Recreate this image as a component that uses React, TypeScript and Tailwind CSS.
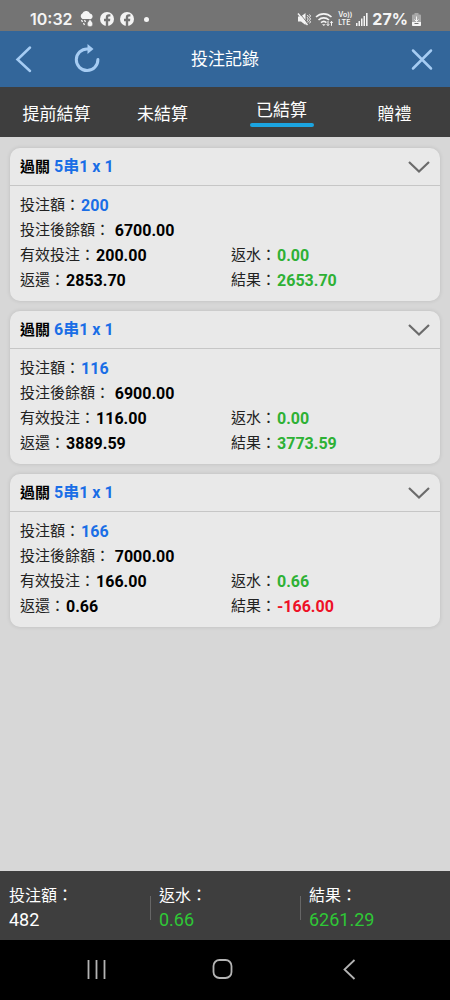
import React from "react";

type Bet = {
  type: string;
  stake: string;
  balance: string;
  valid: string;
  payout: string;
  rebate: string;
  result: string;
};

const bets: Bet[] = [
  {
    type: "5串1 x 1",
    stake: "200",
    balance: "6700.00",
    valid: "200.00",
    payout: "2853.70",
    rebate: "0.00",
    result: "2653.70",
  },
  {
    type: "6串1 x 1",
    stake: "116",
    balance: "6900.00",
    valid: "116.00",
    payout: "3889.59",
    rebate: "0.00",
    result: "3773.59",
  },
  {
    type: "5串1 x 1",
    stake: "166",
    balance: "7000.00",
    valid: "166.00",
    payout: "0.66",
    rebate: "0.66",
    result: "-166.00",
  },
];

const tabs = ["提前結算", "未結算", "已結算", "贈禮"];

const FacebookIcon = () => (
  <svg width="14" height="14" viewBox="0 0 14 14">
    <circle cx="7" cy="7" r="7" fill="#f4f4f4" />
    <path
      d="M5.800 14V9.200H4V6.800h1.800V5.400C5.800 3.500 7 2.300 8.800 2.300h1.600v2.200H9.200c-.7 0-1 .4-1 1v1.300h2.100L10 9.200H8.200V14z"
      fill="#747474"
    />
  </svg>
);

const StatusBar = () => (
  <div className="flex h-[31px] items-center justify-between bg-[#747474] pt-[7px] pr-[29px] pl-[30px] font-['Inter','Liberation_Sans',sans-serif] text-[#f4f4f4]">
    <div className="flex items-center gap-[6px]">
      <span className="text-base leading-5 font-semibold">10:32</span>
      <svg width="15" height="16" viewBox="0 0 15 16">
        <path
          d="M3.500 8A3 3 0 0 1 3.300 2.600 4.200 4.200 0 0 1 11 2.400 3 3 0 0 1 12 8z"
          fill="#f4f4f4"
        />
        <path
          d="M2.500 9l1 2M5.500 9l1 2M4.500 12l1 2"
          stroke="#f4f4f4"
          strokeWidth="1.3"
        />
        <path
          d="M11 8c1.700 2.600 2.800 3.500 2.800 5a2.800 2.800 0 0 1-5.600 0c0-1.500 1.100-2.400 2.800-5z"
          fill="#f4f4f4"
          stroke="#747474"
          strokeWidth=".6"
        />
      </svg>
      <FacebookIcon />
      <FacebookIcon />
      <span className="ml-1 size-[5px] rounded-full bg-[#f4f4f4]" />
    </div>
    <div className="flex items-center gap-1">
      <svg width="14" height="14" viewBox="0 0 14 14" fill="none">
        <path d="M1 4.500h3L8.500 1v12L4 9.500H1z" fill="#f4f4f4" />
        <path
          d="M10.300 3l1 1.300-1 1.400 1 1.300-1 1.300 1 1.400-1 1.300M12.500 2.500l1 1.400-1 1.500 1 1.500-1 1.500 1 1.500-1 1.500"
          stroke="#f4f4f4"
        />
        <path d="M2.500 1.200l9 11" stroke="#747474" />
        <path d="M1 1.500l9.500 11.500" stroke="#f4f4f4" strokeWidth="1.400" />
      </svg>
      <svg width="19" height="15" viewBox="0 0 19 15" fill="none">
        <path
          d="M1 5c4.500-4.200 11-4.200 15.500 0M3.500 8c3-2.800 7.500-2.800 10.500 0M6 10.600c1.800-1.600 3.800-1.600 5.400 0"
          stroke="#f4f4f4"
          strokeWidth="1.600"
        />
        <path d="M7 12.200h3.600L8.800 14z" fill="#f4f4f4" />
        <path
          d="M13 9v4.500M11.700 12.200l1.300 1.500 1.300-1.500M16.500 13.800V9.500M15.200 10.800l1.300-1.500 1.300 1.500"
          stroke="#f4f4f4"
        />
      </svg>
      <span className="flex flex-col text-[7px] leading-[8px] font-semibold">
        <span>Vo))</span>
        <span>LTE</span>
      </span>
      <svg width="12" height="13" viewBox="0 0 12 13" fill="#f4f4f4">
        <path d="M0 10h1.500v3H0zM2.500 8H4v5H2.500zM5 5.500h1.500V13H5zM7.500 3H9v10H7.500zM10 0h1.600v13H10z" />
      </svg>
      <span className="text-base leading-5 font-bold">27%</span>
      <svg width="9" height="13" viewBox="0 0 9 13">
        <path
          d="M2.500 0h4v1.500H8A1 1 0 0 1 9 2.500V12a1 1 0 0 1-1 1H1a1 1 0 0 1-1-1V2.500a1 1 0 0 1 1-1h1.500z"
          fill="#a9a9a9"
        />
        <path d="M0 9h9v3a1 1 0 0 1-1 1H1a1 1 0 0 1-1-1z" fill="#f4f4f4" />
        <path d="M4.500 3.500v5M2.500 6.500l2 2 2-2" stroke="#f4f4f4" fill="none" />
        <path d="M2.500 10.500h4" stroke="#747474" />
      </svg>
    </div>
  </div>
);

const Header = () => (
  <header className="grid h-14 grid-cols-[1fr_auto_1fr] items-center bg-[#33669a] px-3 text-[#a6ccf3]">
    <div className="flex items-center gap-10">
      <button type="button" aria-label="返回">
        <svg width="22" height="30" viewBox="0 0 22 30" fill="none">
          <path
            d="M18 3.500L5.500 15.500l12.500 11.500"
            stroke="currentColor"
            strokeWidth="2.500"
            strokeLinecap="round"
          />
        </svg>
      </button>
      <button type="button" aria-label="重新整理">
        <svg width="28" height="30" viewBox="0 0 28 30" fill="none">
          <path
            d="M14 5h-.5A10.800 10.800 0 1 0 23.900 15.500"
            stroke="currentColor"
            strokeWidth="3"
            strokeLinecap="round"
          />
          <path d="M13.500 0L19.500 5l-6 5z" fill="currentColor" />
        </svg>
      </button>
    </div>
    <h1 className="text-[17px] leading-6 text-white">投注記錄</h1>
    <button type="button" aria-label="關閉" className="justify-self-end">
      <svg width="32" height="30" viewBox="0 0 32 30" fill="none">
        <path
          d="M7 6.500l18 18M25 6.500l-18 18"
          stroke="currentColor"
          strokeWidth="2.500"
          strokeLinecap="round"
        />
      </svg>
    </button>
  </header>
);

const Tabs = () => (
  <div
    role="tablist"
    className="grid h-[50px] grid-cols-[113fr_99fr_139fr_87fr] items-center justify-items-center bg-[#3e3e3e] pr-3 text-[17px] leading-6 text-white"
  >
    {tabs.map((tab) =>
      tab === "已結算" ? (
        <button
          key={tab}
          type="button"
          role="tab"
          aria-selected="true"
          className="flex w-16 flex-col items-center"
        >
          {tab}
          <span className="mt-px h-1 w-full rounded-sm bg-[#1ba4e0]" />
        </button>
      ) : (
        <button key={tab} type="button" role="tab" aria-selected="false" className="pt-1">
          {tab}
        </button>
      )
    )}
  </div>
);

const Field = ({
  label,
  value,
  color = "text-black",
}: {
  label: string;
  value: string;
  color?: string;
}) => (
  <div className="flex items-center gap-px">
    <dt className="whitespace-pre">{label}</dt>
    <dd className={`text-base leading-[25px] font-bold ${color}`}>{value}</dd>
  </div>
);

const BetCard = ({ bet }: { bet: Bet }) => (
  <article className="rounded-[10px] bg-[#e9e9e9] shadow-[0_0_4px_rgba(0,0,0,0.12)]">
    <button
      type="button"
      className="flex h-[38px] w-full items-center justify-between border-b border-[#c6c6c6] px-[10px] text-left"
    >
      <span className="flex items-center gap-1 text-[15px] leading-6 font-bold text-black">
        過關
        <span className="text-base leading-6 text-[#1a6ee6]">{bet.type}</span>
      </span>
      <svg width="22" height="14" viewBox="0 0 22 14" fill="none">
        <path d="M1 2l10 9.500L21 2" stroke="#6b6b6b" strokeWidth="2.200" />
      </svg>
    </button>
    <dl className="grid grid-cols-[211fr_199fr] px-[10px] pt-[7px] pb-2 text-[15px] leading-[25px] text-[#222]">
      <div className="col-span-2">
        <Field label="投注額：" value={bet.stake} color="text-[#1a6ee6]" />
        <Field label="投注後餘額： " value={bet.balance} />
      </div>
      <Field label="有效投注：" value={bet.valid} />
      <Field label="返水：" value={bet.rebate} color="text-[#2eb135]" />
      <Field label="返還：" value={bet.payout} />
      <Field
        label="結果："
        value={bet.result}
        color={bet.result.startsWith("-") ? "text-[#ee1126]" : "text-[#2eb135]"}
      />
    </dl>
  </article>
);

const Summary = () => (
  <dl className="grid h-[69px] grid-cols-3 items-center bg-[#3e3e3e] pt-1 text-white">
    <div className="pl-[9px]">
      <dt className="text-base leading-6">投注額：</dt>
      <dd className="text-lg leading-6">482</dd>
    </div>
    <div className="flex items-center gap-2">
      <span className="h-6 w-px bg-[#666]" />
      <div>
        <dt className="text-base leading-6">返水：</dt>
        <dd className="text-lg leading-6 text-[#2fc736]">0.66</dd>
      </div>
    </div>
    <div className="flex items-center gap-2">
      <span className="h-6 w-px bg-[#666]" />
      <div>
        <dt className="text-base leading-6">結果：</dt>
        <dd className="text-lg leading-6 text-[#2fc736]">6261.29</dd>
      </div>
    </div>
  </dl>
);

const NavBar = () => (
  <nav className="flex h-[60px] items-center justify-between bg-black pr-[89px] pl-[85px] text-[#b4b4b4]">
    <button type="button" aria-label="最近">
      <svg width="22" height="22" viewBox="0 0 22 22" fill="none">
        <path d="M3.500 1v19M11.500 1v19M19.500 1v19" stroke="currentColor" strokeWidth="1.800" />
      </svg>
    </button>
    <button type="button" aria-label="主畫面">
      <svg width="22" height="22" viewBox="0 0 22 22" fill="none">
        <rect x="1.500" y="1" width="18" height="18" rx="6" stroke="currentColor" strokeWidth="1.800" />
      </svg>
    </button>
    <button type="button" aria-label="上一頁">
      <svg width="22" height="22" viewBox="0 0 22 22" fill="none">
        <path d="M15.500 1L5.500 10.500l10 9.500" stroke="currentColor" strokeWidth="1.800" />
      </svg>
    </button>
  </nav>
);

const App = () => {
  return (
    <div className="flex min-h-screen flex-col bg-[#d7d7d7] font-['Roboto','Noto_Sans_CJK_TC',sans-serif]">
      <StatusBar />
      <Header />
      <Tabs />
      <main className="flex flex-1 flex-col gap-[10px] px-[10px] py-[11px]">
        {bets.map((bet) => (
          <BetCard key={bet.balance} bet={bet} />
        ))}
      </main>
      <Summary />
      <NavBar />
    </div>
  );
};

export default App;
